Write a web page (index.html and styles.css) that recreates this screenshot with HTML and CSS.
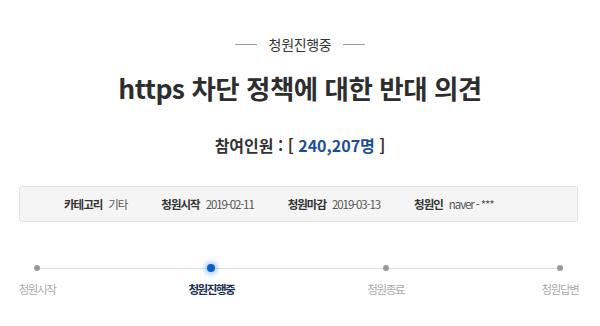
FILE: index.html
```html
<!DOCTYPE html>
<html lang="ko">
<head>
    <meta charset="UTF-8">
    <title>청원진행중</title>
    <link rel="stylesheet" href="styles.css">
</head>
<body>

<div class="petition">
    <div class="state-tag"><span>청원진행중</span></div>
    <h1 class="title">https 차단 정책에 대한 반대 의견</h1>
    <p class="count">참여인원 : [ <span class="num">240,207명</span> ]</p>

    <ul class="info">
        <li><strong>카테고리</strong>기타</li>
        <li><strong>청원시작</strong>2019-02-11</li>
        <li><strong>청원마감</strong>2019-03-13</li>
        <li><strong>청원인</strong>naver - ***</li>
    </ul>

    <ol class="progress">
        <li class="step"><i class="dot"></i>청원시작</li>
        <li class="step on"><i class="dot"></i>청원진행중</li>
        <li class="step"><i class="dot"></i>청원종료</li>
        <li class="step"><i class="dot"></i>청원답변</li>
    </ol>
</div>

</body>
</html>
```

FILE: styles.css
```css
body {
    margin: 0;
    font-family: "Noto Sans CJK KR", "Noto Sans", sans-serif;
    color: #333;
    background: #fff;
}
.petition {
    width: 600px;
    padding-top: 34px;
}
.state-tag {
    display: flex;
    justify-content: center;
    align-items: center;
    gap: 12px;
    font-size: 14px;
    line-height: 20px;
    letter-spacing: -0.3px;
    color: #333;
}
.state-tag::before,
.state-tag::after {
    content: "";
    width: 22px;
    height: 1px;
    background: #999;
}
.title {
    margin: 16px 0 0;
    text-align: center;
    font-size: 26.5px;
    line-height: 36px;
    font-weight: 700;
    letter-spacing: -0.5px;
    color: #2e2e2e;
}
.count {
    margin: 27px 0 0;
    text-align: center;
    font-size: 16px;
    line-height: 24px;
    font-weight: 700;
    color: #333;
}
.count .num {
    color: #1c4e96;
}
.info {
    list-style: none;
    margin: 29px 22px 0 19px;
    padding: 0 0 0 44px;
    height: 34px;
    display: flex;
    align-items: center;
    gap: 34px;
    background: #f5f5f5;
    border: 1px solid #e2e2e2;
    border-radius: 3px;
    font-size: 11.5px;
    color: #555;
}
.info li {
    letter-spacing: -1.1px;
}
.info strong {
    color: #333;
    margin-right: 6px;
    letter-spacing: -1px;
}
.progress {
    list-style: none;
    margin: 43px 10px 0 7px;
    padding: 0;
    display: flex;
    justify-content: space-between;
    position: relative;
}
.progress::before {
    content: "";
    position: absolute;
    left: 30px;
    right: 30px;
    top: 3px;
    height: 1px;
    background: #ddd;
}
.step {
    width: 60px;
    display: flex;
    flex-direction: column;
    align-items: center;
    font-size: 11.5px;
    line-height: 16px;
    letter-spacing: -1.4px;
    color: #aaa;
    position: relative;
}
.dot {
    width: 6px;
    height: 6px;
    border-radius: 50%;
    background: #999;
    margin-bottom: 10px;
}
.step.on {
    color: #1a2f55;
    font-weight: 700;
}
.step.on .dot {
    width: 8px;
    height: 8px;
    margin: -1px 0 9px;
    background: #0b5fc6;
    box-shadow: 0 0 4px 3px rgba(60, 140, 235, 0.35);
}
```
